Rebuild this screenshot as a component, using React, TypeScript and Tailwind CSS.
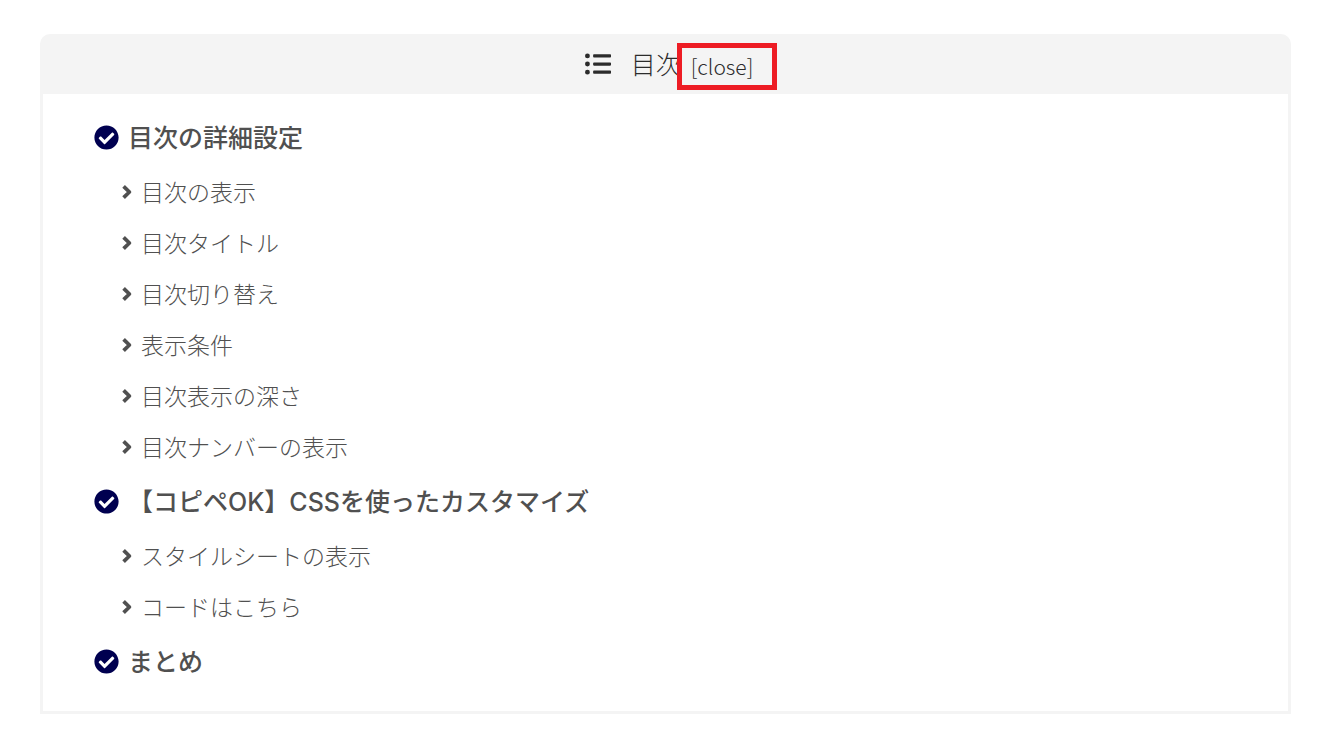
import { useState } from 'react'
import { FaCheckCircle, FaListUl } from 'react-icons/fa'

interface TocSection {
  id: string
  title: string
  items: { id: string; label: string }[]
}

const sections: TocSection[] = [
  {
    id: 'settings',
    title: '目次の詳細設定',
    items: [
      { id: 'display', label: '目次の表示' },
      { id: 'title', label: '目次タイトル' },
      { id: 'toggle', label: '目次切り替え' },
      { id: 'conditions', label: '表示条件' },
      { id: 'depth', label: '目次表示の深さ' },
      { id: 'numbering', label: '目次ナンバーの表示' },
    ],
  },
  {
    id: 'customize',
    title: '【コピペOK】CSSを使ったカスタマイズ',
    items: [
      { id: 'stylesheet', label: 'スタイルシートの表示' },
      { id: 'code', label: 'コードはこちら' },
    ],
  },
  { id: 'summary', title: 'まとめ', items: [] },
]

function Chevron() {
  return (
    <svg className="h-[18px] w-3" viewBox="0 0 12 18" fill="none" stroke="currentColor" aria-hidden="true">
      <path strokeWidth={3.8} strokeLinejoin="round" d="M1.6 3.4L7.4 9L1.6 14.6" />
    </svg>
  )
}

export default function App() {
  const [isOpen, setIsOpen] = useState(true)

  return (
    <main className="min-h-screen bg-white pt-[34px] pb-9 pl-10 pr-[38px] font-['Noto_Sans_CJK_JP',sans-serif] text-[#505050]">
      <nav aria-label="目次" className="rounded-t-[10px] border-[3px] border-[#f4f4f4]">
        {/* Header */}
        <div className="flex h-[57px] items-center justify-center bg-[#f4f4f4] pb-[3px] pl-[7px] text-[#2b2b2b]">
          <FaListUl className="mr-5 size-[26px]" />
          <h2 className="pb-[2px] text-[25px] leading-[36px] font-light">目次</h2>
          <button
            type="button"
            aria-expanded={isOpen}
            onClick={() => setIsOpen(!isOpen)}
            className="relative mt-1 ml-[10px] cursor-pointer text-[21px] leading-[37px] font-light"
          >
            [{isOpen ? 'close' : 'open'}]
            {/* Highlight frame */}
            <span className="pointer-events-none absolute -top-[5px] -right-6 -bottom-[5px] -left-[14px] border-[5px] border-[#ed1c24]" />
          </button>
        </div>

        {/* List */}
        {isOpen && (
          <ul className="pt-[14px] pb-[21px] pl-[51px]">
            {sections.map((section) => (
              <li key={section.id}>
                <a
                  href={`#${section.id}`}
                  className="flex h-[58px] items-center gap-[9px] font-[Inter,'Noto_Sans_CJK_JP',sans-serif] text-[25px] font-medium"
                >
                  <FaCheckCircle className="size-[25px] text-[#000050]" />
                  <span className="pt-1">{section.title}</span>
                </a>
                {section.items.length > 0 && (
                  <ul className="pl-7">
                    {section.items.map((item) => (
                      <li key={item.id}>
                        <a href={`#${item.id}`} className="flex h-[51px] items-center gap-[7px] text-[23px] font-light">
                          <Chevron />
                          {item.label}
                        </a>
                      </li>
                    ))}
                  </ul>
                )}
              </li>
            ))}
          </ul>
        )}
      </nav>
    </main>
  )
}
